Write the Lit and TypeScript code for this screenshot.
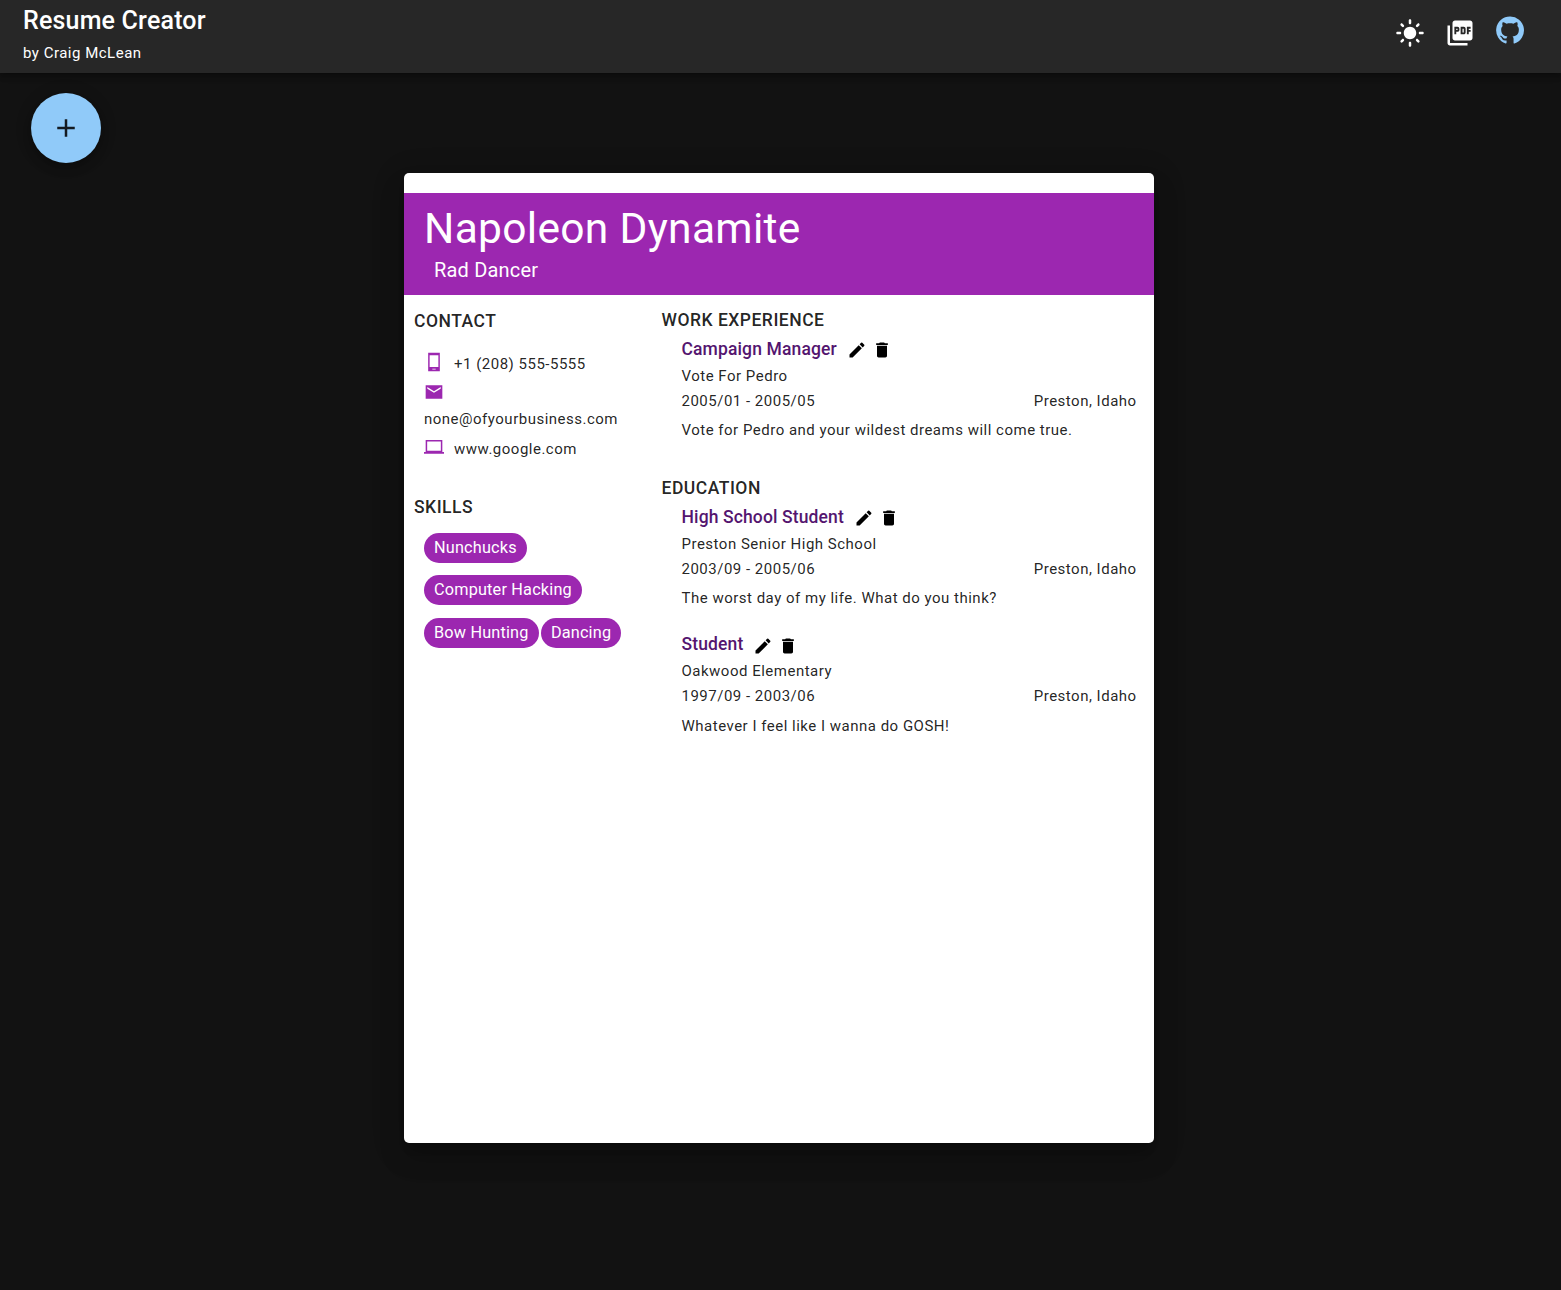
import { LitElement, html, svg, css } from "lit";
import { customElement, property } from "lit/decorators.js";

const ICONS: Record<string, string> = {
  sun: "M12 7c-2.76 0-5 2.24-5 5s2.24 5 5 5 5-2.24 5-5-2.24-5-5-5zM2 13h2c.55 0 1-.45 1-1s-.45-1-1-1H2c-.55 0-1 .45-1 1s.45 1 1 1zm18 0h2c.55 0 1-.45 1-1s-.45-1-1-1h-2c-.55 0-1 .45-1 1s.45 1 1 1zM11 2v2c0 .55.45 1 1 1s1-.45 1-1V2c0-.55-.45-1-1-1s-1 .45-1 1zm0 18v2c0 .55.45 1 1 1s1-.45 1-1v-2c0-.55-.45-1-1-1s-1 .45-1 1zM5.99 4.58c-.39-.39-1.03-.39-1.41 0-.39.39-.39 1.03 0 1.41l1.06 1.06c.39.39 1.03.39 1.41 0s.39-1.03 0-1.41L5.99 4.58zm12.37 12.37c-.39-.39-1.03-.39-1.41 0-.39.39-.39 1.03 0 1.41l1.06 1.06c.39.39 1.03.39 1.41 0 .39-.39.39-1.03 0-1.41l-1.06-1.06zm1.06-10.96c.39-.39.39-1.03 0-1.41-.39-.39-1.03-.39-1.41 0l-1.06 1.06c-.39.39-.39 1.03 0 1.41s1.03.39 1.41 0l1.06-1.06zM7.05 18.36c.39-.39.39-1.03 0-1.41-.39-.39-1.03-.39-1.41 0l-1.06 1.06c-.39.39-.39 1.03 0 1.41s1.03.39 1.41 0l1.06-1.06z",
  pdf: "M20 2H8c-1.1 0-2 .9-2 2v12c0 1.1.9 2 2 2h12c1.1 0 2-.9 2-2V4c0-1.1-.9-2-2-2zm-8.5 7.5c0 .83-.67 1.5-1.5 1.5H9v2H7.5V7H10c.83 0 1.5.67 1.5 1.5v1zm5 2c0 .83-.67 1.5-1.5 1.5h-2.5V7H15c.83 0 1.5.67 1.5 1.5v3zm4-3H19v1h1.5V11H19v2h-1.5V7h3v1.5zM9 9.5h1v-1H9v1zM4 6H2v14c0 1.1.9 2 2 2h14v-2H4V6zm10 5.5h1v-3h-1v3z",
  github: "M12 1.27a11 11 0 00-3.48 21.46c.55.09.73-.28.73-.55v-1.84c-3.03.64-3.67-1.46-3.67-1.46-.55-1.29-1.28-1.65-1.28-1.65-.92-.65.1-.65.1-.65 1.1 0 1.73 1.1 1.73 1.1.92 1.65 2.57 1.2 3.21.92a2 2 0 01.64-1.47c-2.47-.27-5.04-1.19-5.04-5.5 0-1.1.46-2.1 1.2-2.84a3.76 3.76 0 010-2.93s.91-.28 3.11 1.1c1.8-.49 3.7-.49 5.5 0 2.1-1.38 3.02-1.1 3.02-1.1a3.76 3.76 0 01.1 2.93c.83.74 1.2 1.74 1.2 2.94 0 4.21-2.57 5.13-5.04 5.4.45.37.82.92.82 2.02v3.03c0 .27.1.64.73.55A11 11 0 0012 1.27",
  add: "M19 13h-6v6h-2v-6H5v-2h6V5h2v6h6v2z",
  phone: "M19 1H5v22h14V1zm-5 20h-4v-1h4v1zm3.25-3H6.75V4h10.5v14z",
  mail: "M22 4H2v16h20V4zm-2 4l-8 5-8-5V6l8 5 8-5v2z",
  laptop: "M22 18V3.6H2V18H0v2h24v-2h-2zM20.2 16.5H3.8V5.5h16.4v11z",
  edit: "M3 17.25V21h3.75L17.81 9.94l-3.75-3.75L3 17.25zM20.71 7.04c.39-.39.39-1.02 0-1.41l-2.34-2.34a.9959.9959 0 0 0-1.41 0l-1.83 1.83 3.75 3.75 1.83-1.83z",
  trash: "M6 19c0 1.1.9 2 2 2h8c1.1 0 2-.9 2-2V7H6v12zM19 4h-3.5l-1-1h-5l-1 1H5v2h14V4z",
};

@customElement("app-icon")
export class AppIcon extends LitElement {
  @property() name = "";
  static styles = css`
    :host { display: block; flex: none; width: 20px; height: 20px; }
    svg { display: block; width: 100%; height: 100%; fill: currentColor; }
  `;
  render() {
    return html`<svg viewBox="0 0 24 24" aria-hidden="true">${svg`<path d=${ICONS[this.name] ?? ""}></path>`}</svg>`;
  }
}

interface Entry {
  title: string;
  org: string;
  dates: string;
  place: string;
  text: string;
}

const WORK: Entry[] = [
  { title: "Campaign Manager", org: "Vote For Pedro", dates: "2005/01 - 2005/05", place: "Preston, Idaho", text: "Vote for Pedro and your wildest dreams will come true." },
];
const EDUCATION: Entry[] = [
  { title: "High School Student", org: "Preston Senior High School", dates: "2003/09 - 2005/06", place: "Preston, Idaho", text: "The worst day of my life. What do you think?" },
  { title: "Student", org: "Oakwood Elementary", dates: "1997/09 - 2003/06", place: "Preston, Idaho", text: "Whatever I feel like I wanna do GOSH!" },
];
const CONTACT = [
  { icon: "phone", text: "+1 (208) 555-5555" },
  { icon: "mail", text: "none@ofyourbusiness.com" },
  { icon: "laptop", text: "www.google.com" },
];
const SKILLS = ["Nunchucks", "Computer Hacking", "Bow Hunting", "Dancing"];

@customElement("app-root")
export class AppRoot extends LitElement {
  static styles = css`
    :host {
      display: block;
      min-height: 1290px;
      background: #121212;
      font-family: Roboto, "Liberation Sans", sans-serif;
      color: #fff;
    }
    * { box-sizing: border-box; }
    h1, h2, h3, p { margin: 0; }
    .bar {
      position: relative;
      display: flex;
      justify-content: space-between;
      height: 73px;
      padding: 0 36px 0 23px;
      background: #272727;
      box-shadow: 0 2px 4px -1px rgba(0,0,0,.2), 0 4px 5px 0 rgba(0,0,0,.14), 0 1px 10px 0 rgba(0,0,0,.12);
    }
    .brand { padding-top: 1px; font-size: 25px; font-weight: 500; line-height: 40px; letter-spacing: .0075em; }
    .caption { font-size: 15px; font-weight: 400; line-height: 25px; letter-spacing: .03333em; }
    .actions { display: flex; gap: 20px; padding-top: 18px; }
    .actions app-icon { width: 30px; height: 30px; }
    .actions .github { color: #90caf9; margin-top: -3px; }
    .fab {
      display: flex;
      align-items: center;
      justify-content: center;
      width: 70px;
      height: 70px;
      margin: 20px 0 0 31px;
      padding: 0;
      border: 0;
      border-radius: 50%;
      background: #90caf9;
      color: rgba(0,0,0,.87);
      box-shadow: 0 3px 5px -1px rgba(0,0,0,.2), 0 6px 10px 0 rgba(0,0,0,.14), 0 1px 18px 0 rgba(0,0,0,.12);
    }
    .fab app-icon { width: 30px; height: 30px; }
    .sheet {
      width: 750px;
      height: 970px;
      margin: 10px 0 0 404px;
      padding-top: 20px;
      border-radius: 5px;
      background: #fff;
      color: rgba(0,0,0,.87);
      box-shadow: 0 8px 10px -5px rgba(0,0,0,.2), 0 16px 24px 2px rgba(0,0,0,.14), 0 6px 30px 5px rgba(0,0,0,.12);
    }
    .banner { height: 102px; padding: 10px 20px; background: #9c27b0; color: #fff; }
    .name { font-size: 42.5px; font-weight: 400; line-height: 52px; letter-spacing: .00735em; }
    .role { padding-left: 10px; font-size: 20px; line-height: 30px; letter-spacing: .00938em; }
    .columns { display: grid; grid-template-columns: 247.5px 1fr; }
    .side { padding: 13px 10px 0; }
    .main { padding: 12px 17.4px 0 10px; }
    .heading { padding-bottom: 2px; font-size: 17.5px; font-weight: 500; line-height: 26px; letter-spacing: .02857em; text-transform: uppercase; }
    .contact { display: flex; flex-direction: column; gap: 5px; padding: 16px 10px 0; }
    .line { display: flex; flex-wrap: wrap; gap: 5px 10px; }
    .line app-icon { color: #9c27b0; }
    .side .skills-title { padding-top: 32px; }
    .skills { display: flex; flex-wrap: wrap; gap: 12.4px 2.3px; padding: 11px 0 0 10px; }
    .chip {
      height: 30px;
      padding: 0 10px;
      border-radius: 15px;
      background: #9c27b0;
      color: #fff;
      font-size: 16.25px;
      line-height: 30px;
      letter-spacing: .1875px;
    }
    .section + .section { margin-top: 32px; }
    .entry { padding-left: 20px; padding-top: 1px; }
    .entry + .entry { padding-top: 20px; }
    .entry-head { display: flex; align-items: center; gap: 5px; color: #000; }
    .entry-title { margin-right: 5px; padding-bottom: 2px; font-size: 17.5px; font-weight: 500; line-height: 26px; letter-spacing: .0075em; color: #54156f; }
    .entry + .entry app-icon { margin-top: 2px; }
    .row { display: flex; justify-content: space-between; }
    .text { padding-top: 4px; }
    .entry + .entry .text { padding-top: 5px; }
  `;

  private entry(e: Entry) {
    return html`<article class="entry">
      <div class="entry-head">
        <h3 class="entry-title">${e.title}</h3>
        <app-icon name="edit"></app-icon><app-icon name="trash"></app-icon>
      </div>
      <p class="caption">${e.org}</p>
      <div class="row caption"><span>${e.dates}</span><span>${e.place}</span></div>
      <p class="caption text">${e.text}</p>
    </article>`;
  }

  private section(title: string, entries: Entry[]) {
    return html`<section class="section">
      <h2 class="heading">${title}</h2>
      ${entries.map((e) => this.entry(e))}
    </section>`;
  }

  render() {
    return html`
      <header class="bar">
        <div>
          <div class="brand">Resume Creator</div>
          <div class="caption">by Craig McLean</div>
        </div>
        <nav class="actions">
          <app-icon name="sun"></app-icon>
          <app-icon name="pdf"></app-icon>
          <app-icon class="github" name="github"></app-icon>
        </nav>
      </header>
      <button class="fab" aria-label="Add"><app-icon name="add"></app-icon></button>
      <main class="sheet">
        <div class="banner">
          <h1 class="name">Napoleon Dynamite</h1>
          <p class="role">Rad Dancer</p>
        </div>
        <div class="columns">
          <aside class="side">
            <h2 class="heading">Contact</h2>
            <div class="contact">
              ${CONTACT.map((c) => html`<div class="line"><app-icon name=${c.icon}></app-icon><span class="caption">${c.text}</span></div>`)}
            </div>
            <h2 class="heading skills-title">Skills</h2>
            <div class="skills">${SKILLS.map((s) => html`<span class="chip">${s}</span>`)}</div>
          </aside>
          <div class="main">
            ${this.section("Work Experience", WORK)}
            ${this.section("Education", EDUCATION)}
          </div>
        </div>
      </main>
    `;
  }
}
